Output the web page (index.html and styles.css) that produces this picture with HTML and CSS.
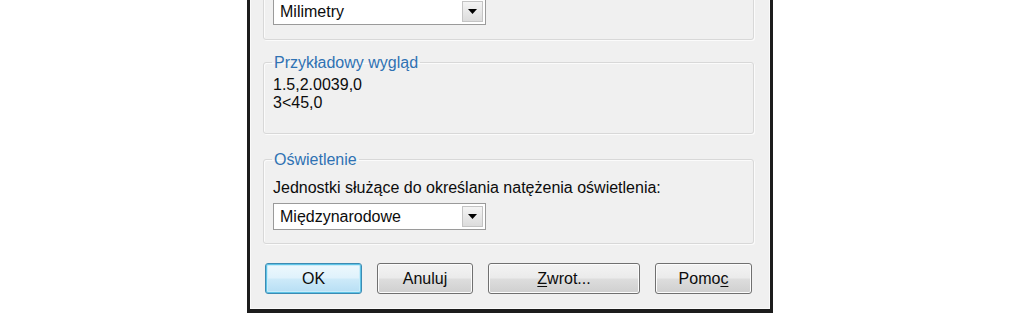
FILE: index.html
```html
<!DOCTYPE html>
<html lang="pl">
<head>
<meta charset="utf-8">
<title>Jednostki rysunku</title>
<link rel="stylesheet" href="styles.css">
</head>
<body>
<div class="dialog">
  <div class="group group-top">
    <div class="combo combo-first">
      <span class="combo-text">Milimetry</span>
      <span class="combo-btn"><svg width="9" height="5" viewBox="0 0 9 5"><path d="M0 0H9L4.5 5Z" fill="#000"/></svg></span>
    </div>
  </div>

  <fieldset class="group group-sample">
    <legend>Przykładowy wygląd</legend>
    <div class="sample">1.5,2.0039,0</div>
    <div class="sample">3&lt;45,0</div>
  </fieldset>

  <fieldset class="group group-light">
    <legend>Oświetlenie</legend>
    <div class="label">Jednostki służące do określania natężenia oświetlenia:</div>
    <div class="combo">
      <span class="combo-text">Międzynarodowe</span>
      <span class="combo-btn"><svg width="9" height="5" viewBox="0 0 9 5"><path d="M0 0H9L4.5 5Z" fill="#000"/></svg></span>
    </div>
  </fieldset>

  <div class="buttons">
    <button class="btn btn-ok">OK</button>
    <button class="btn btn-cancel">Anuluj</button>
    <button class="btn btn-back"><u>Z</u>wrot...</button>
    <button class="btn btn-help">Pomo<u>c</u></button>
  </div>
</div>
</body>
</html>
```

FILE: styles.css
```css
html, body {
  margin: 0;
  padding: 0;
  background: #ffffff;
}
body {
  height: 314px;
  overflow: hidden;
  font-family: "Liberation Sans", Arial, sans-serif;
  font-size: 16px;
  color: #0c0c0c;
}
.dialog {
  margin: -29px 0 0 247px;
  width: 491px;
  border: 3px solid #1c1c1c;
  border-bottom-width: 4px;
  box-shadow: inset 1px 1px 0 #fafafa, inset -1px -1px 0 #fafafa;
  background: #f0f0f0;
  padding: 13px 16px 15px 13px;
}
.group {
  margin: 0;
  border: 1px solid #d8d8d8;
  border-radius: 3px;
  box-shadow: 1px 1px 0 #fbfbfb, inset 1px 1px 0 #fbfbfb;
  padding: 9px 9px 13px 9px;
  line-height: 19px;
  min-width: 0;
}
.group legend {
  color: #2f72b3;
  padding: 0 2px;
  margin-left: -1px;
  line-height: 19px;
}
.group-top {
  padding-top: 10px;
  padding-bottom: 14px;
}
.label {
  line-height: 19px;
  height: 19px;
}
.combo {
  margin-top: 6px;
  width: 211px;
  height: 25px;
  border: 1px solid #9a9a9a;
  background: #fff;
  display: flex;
  align-items: center;
  justify-content: space-between;
  padding: 0;
}
.combo-first {
  margin-top: 0;
}
.combo-text {
  padding-left: 6px;
}
.combo-btn {
  width: 21px;
  height: 21px;
  margin-right: 2px;
  border: 1px solid #c4c4c4;
  background: linear-gradient(#f4f4f4, #dcdcdc);
  display: flex;
  align-items: center;
  justify-content: center;
  box-sizing: border-box;
}
.group-sample {
  margin-top: 13px;
  padding: 4px 9px 21px 9px;
}
.sample {
  line-height: 18px;
}
.group-light {
  margin-top: 16px;
}
.buttons {
  margin-top: 19px;
  padding-left: 2px;
  display: flex;
  gap: 15px;
}
.btn {
  height: 31px;
  font-family: "Liberation Sans", Arial, sans-serif;
  font-size: 16px;
  color: #0c0c0c;
  border: 1px solid #707070;
  border-radius: 3px;
  background: linear-gradient(#f3f3f3 0%, #ebebeb 48%, #dddddd 52%, #cfcfcf 100%);
  box-shadow: inset 0 0 0 1px #fcfcfc;
  padding: 0;
}
.btn u {
  text-decoration-thickness: 1px;
  text-underline-offset: 2px;
}
.btn-ok {
  width: 97px;
  border-color: #3c8bb3;
  background: linear-gradient(#eef8fd 0%, #dff2fc 48%, #cdeaf9 52%, #b6def4 100%);
  box-shadow: inset 0 0 0 1px #5ec3e6, inset 0 0 0 2px #c8ecfa;
}
.btn-cancel { width: 96px; }
.btn-back { width: 152px; }
.btn-help { width: 97px; }
```
